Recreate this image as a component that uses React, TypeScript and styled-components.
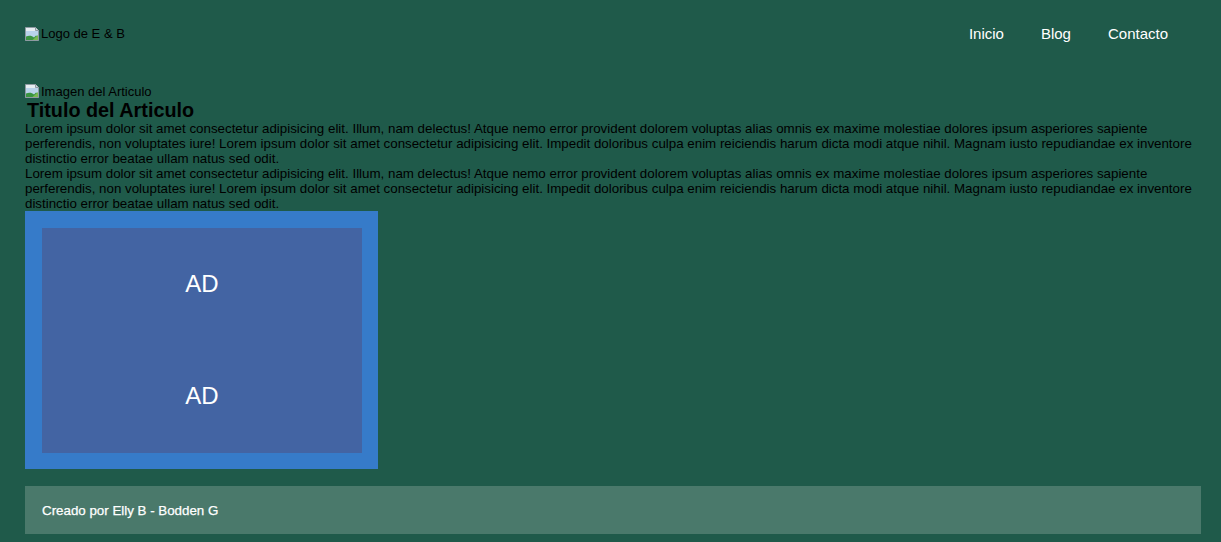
import React from "react";
import styled, { createGlobalStyle } from "styled-components";

const GlobalStyle = createGlobalStyle`
  html, body {
    margin: 0;
    padding: 0;
    background: #1f5a4a;
  }
  body {
    font-family: "Liberation Sans", Arial, sans-serif;
    font-size: 13.333px;
    color: #000;
  }
`;

const Page = styled.div`
  display: flex;
  flex-direction: column;
  padding: 0 20px 8px 25px;
  min-height: 534px;
`;

const Header = styled.header`
  display: flex;
  align-items: center;
  justify-content: space-between;
  height: 67px;
`;

const AltImage = styled.span`
  display: inline-flex;
  align-items: center;
  line-height: 15px;
  font-size: 13px;
  color: #000;
`;

const NavList = styled.nav`
  display: flex;
  gap: 37px;
  padding-right: 33px;
`;

const NavLink = styled.a`
  font-size: 15px;
  color: #fff;
  text-decoration: none;
  line-height: 17px;
`;

const Main = styled.main`
  display: flex;
  flex-direction: column;
  align-items: flex-start;
  margin-top: 16px;
`;

const Title = styled.h2`
  margin: 0 0 0 2px;
  font-size: 19.8px;
  line-height: 22px;
  font-weight: bold;
  color: #000;
`;

const Paragraph = styled.p`
  margin: 0;
  font-size: 13.333px;
  line-height: 15px;
  color: #000;
`;

const AdFrame = styled.aside`
  background: #367bc9;
  padding: 17px 16px 16px 17px;
  width: 320px;
`;

const AdInner = styled.div`
  background: #4364a3;
  height: 225px;
  display: grid;
  grid-template-rows: 1fr 1fr;
`;

const AdSlot = styled.div`
  display: flex;
  align-items: center;
  justify-content: center;
  color: #fff;
  font-size: 24px;
  padding-bottom: 1px;
`;

const Footer = styled.footer`
  margin-top: 17px;
  background: #4a796b;
  height: 48px;
  display: flex;
  align-items: center;
  padding-left: 17px;
  color: #fff;
  font-size: 13.333px;
  font-weight: normal;
  -webkit-text-stroke: 0.25px #fff;
`;

const BrokenIcon = () => (
  <svg width="16" height="16" viewBox="0 0 16 16" style={{ flexShrink: 0 }}>
    <path d="M0.5 1.5 H10.5 L13.5 4.5 V14.5 H0.5 Z" fill="#e6edf1" stroke="#8e9aa2" />
    <path d="M10.5 1.5 V4.5 H13.5" fill="#cfd8dc" stroke="#8e9aa2" />
    <path d="M1 5 H13 V14 H1 Z" fill="#b9d3ea" />
    <path d="M1 14 L1 10.5 C4 9 7 9.5 9 11.5 L11 9.5 L13 10.5 V14 Z" fill="#3a9440" />
    <path d="M7.5 14 L13 9 V14 Z" fill="#79b84f" />
  </svg>
);

const lorem =
  "Lorem ipsum dolor sit amet consectetur adipisicing elit. Illum, nam delectus! Atque nemo error provident dolorem voluptas alias omnis ex maxime molestiae dolores ipsum asperiores sapiente perferendis, non voluptates iure! Lorem ipsum dolor sit amet consectetur adipisicing elit. Impedit doloribus culpa enim reiciendis harum dicta modi atque nihil. Magnam iusto repudiandae ex inventore distinctio error beatae ullam natus sed odit.";

export default function App() {
  return (
    <>
      <GlobalStyle />
      <Page>
        <Header>
          <AltImage role="img" aria-label="Logo de E & B">
            <BrokenIcon />
            Logo de E &amp; B
          </AltImage>
          <NavList>
            <NavLink href="#">Inicio</NavLink>
            <NavLink href="#">Blog</NavLink>
            <NavLink href="#">Contacto</NavLink>
          </NavList>
        </Header>
        <Main>
          <AltImage role="img" aria-label="Imagen del Articulo">
            <BrokenIcon />
            Imagen del Articulo
          </AltImage>
          <Title>Titulo del Articulo</Title>
          <Paragraph>{lorem}</Paragraph>
          <Paragraph>{lorem}</Paragraph>
          <AdFrame>
            <AdInner>
              <AdSlot>AD</AdSlot>
              <AdSlot>AD</AdSlot>
            </AdInner>
          </AdFrame>
        </Main>
        <Footer>Creado por Elly B - Bodden G</Footer>
      </Page>
    </>
  );
}
